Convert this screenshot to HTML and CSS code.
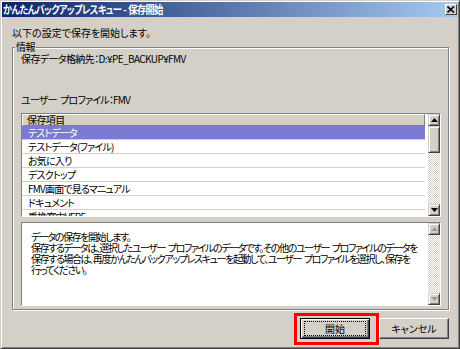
FILE: index.html
```html
<!DOCTYPE html>
<html lang="ja">
<head>
  <meta charset="UTF-8" />
  <title>かんたんバックアップレスキュー - 保存開始</title>
  <link rel="stylesheet" href="styles.css">
</head>
<body>

<div class="window">
  <div class="titlebar">
    <span class="title">かんたんバックアップレスキュー - 保存開始</span>
    <span class="close">
      <svg width="8" height="7" viewBox="0 0 8 7"><path d="M0.5 0.5 L7 6.5 M7 0.5 L0.5 6.5" stroke="#000" stroke-width="1.6"/></svg>
    </span>
  </div>

  <div class="content">
    <p class="lead">以下の設定で保存を開始します。</p>

    <fieldset class="group">
      <legend>情報</legend>
      <div class="group-body">
        <p class="info">保存データ格納先：D:¥PE_BACKUP¥FMV</p>
        <p class="info profile">ユーザー プロファイル：FMV</p>

        <div class="list">
          <div class="list-main">
            <div class="list-head">保存項目</div>
            <ul class="rows">
              <li class="selected">テストデータ</li>
              <li>テストデータ(ファイル)</li>
              <li>お気に入り</li>
              <li>デスクトップ</li>
              <li>FMV画面で見るマニュアル</li>
              <li>ドキュメント</li>
              <li>乗換案内VER5</li>
            </ul>
          </div>
          <div class="scrollbar">
            <span class="sb-btn"><svg width="7" height="4" viewBox="0 0 7 4"><path d="M3.5 0 L7 4 L0 4 Z" fill="#000"/></svg></span>
            <span class="sb-btn thumb"></span>
            <span class="sb-track"></span>
            <span class="sb-btn"><svg width="7" height="4" viewBox="0 0 7 4"><path d="M0 0 L7 0 L3.5 4 Z" fill="#000"/></svg></span>
          </div>
        </div>

        <div class="memo">
          <div class="memo-text">
            データの保存を開始します。<br>
            保存するデータは、選択したユーザー プロファイルのデータです。その他のユーザー プロファイルのデータを<br>
            保存する場合は、再度かんたんバックアップレスキューを起動して、ユーザー プロファイルを選択し、保存を<br>
            行ってください。
          </div>
          <div class="scrollbar">
            <span class="sb-btn"><svg width="7" height="4" viewBox="0 0 7 4"><path d="M3.5 0 L7 4 L0 4 Z" fill="#9a9a9a"/></svg></span>
            <span class="sb-track"></span>
            <span class="sb-btn"><svg width="7" height="4" viewBox="0 0 7 4"><path d="M0 0 L7 0 L3.5 4 Z" fill="#9a9a9a"/></svg></span>
          </div>
        </div>
      </div>
    </fieldset>

    <div class="buttons">
      <button type="button" class="btn default"><span>開始</span></button>
      <button type="button" class="btn"><span>キャンセル</span></button>
    </div>
  </div>
</div>

</body>
</html>
```

FILE: styles.css
```css
body {
  margin: 0;
  font-family: "Noto Sans CJK JP", "Liberation Sans", sans-serif;
  font-size: 10px;
  font-feature-settings: "palt";
  letter-spacing: -0.6px;
  color: #000;
}
.window {
  width: 460px;
  height: 349px;
  box-sizing: border-box;
  background: #d4d0c8;
  border: 1px solid;
  border-color: #d4d0c8 #404040 #404040 #d4d0c8;
  box-shadow: inset 1px 1px #fff, inset -1px -1px #808080;
  padding: 1px;
  display: flex;
  flex-direction: column;
}
.titlebar {
  height: 15px;
  display: flex;
  align-items: center;
  padding-left: 1px;
  background: linear-gradient(90deg, #0a246a, #a6caf0);
}
.title {
  color: #fff;
  font-weight: bold;
  font-size: 11px;
  letter-spacing: -0.8px;
  word-spacing: 1px;
  line-height: 15px;
  white-space: pre;
  transform: scaleX(0.84);
  transform-origin: left center;
}
.close {
  margin-left: auto;
  margin-right: 1px;
  width: 12px;
  height: 11px;
  box-sizing: border-box;
  background: #d4d0c8;
  border: 1px solid;
  border-color: #fff #404040 #404040 #fff;
  display: flex;
  align-items: center;
  justify-content: center;
}
.content {
  flex: 1;
  padding: 0 9px 0 10px;
  display: flex;
  flex-direction: column;
}
.lead {
  margin: 10px 0 2px;
  line-height: 12px;
  letter-spacing: 0;
}
.group {
  min-width: 0;
  margin: 0;
  padding: 0 7px 3px 2px;
  border: 1px solid #808080;
  box-shadow: 1px 1px 0 #fff, inset 1px 1px 0 #fff;
}
.group legend {
  padding: 0 1px;
  line-height: 12px;
  background: #d4d0c8;
}
.group-body {
  padding-left: 6px;
}
.info {
  margin: 0;
  line-height: 12px;
  white-space: nowrap;
}
.profile {
  margin-top: 29px;
  letter-spacing: -0.8px;
  word-spacing: 2px;
}
.list {
  margin-top: 7px;
  height: 104px;
  box-sizing: border-box;
  display: flex;
  background: #fff;
  border: 1px solid;
  border-color: #808080 #fff #fff #808080;
}
.list-main {
  flex: 1;
  min-width: 0;
  overflow: hidden;
  padding-right: 3px;
}
.list-head {
  height: 12px;
  box-sizing: border-box;
  background: #d4d0c8;
  border: 1px solid;
  border-color: #fff #808080 #808080 #fff;
  padding-left: 4px;
  line-height: 10px;
}
.rows {
  list-style: none;
  margin: 0;
  padding: 0;
}
.rows li {
  height: 14px;
  box-sizing: border-box;
  line-height: 13px;
  padding-left: 6px;
  border-bottom: 1px solid #d4d0c8;
  white-space: nowrap;
  letter-spacing: -0.8px;
}
.rows li.selected {
  background: #7b7bd2;
  color: #fff;
}
.scrollbar {
  width: 12px;
  flex: none;
  display: flex;
  flex-direction: column;
  background: repeating-conic-gradient(#fff 0 25%, #d4d0c8 0 50%) 0 0 / 2px 2px;
}
.sb-btn {
  height: 12px;
  box-sizing: border-box;
  background: #d4d0c8;
  border: 1px solid;
  border-color: #d4d0c8 #404040 #404040 #d4d0c8;
  box-shadow: inset 1px 1px #fff, inset -1px -1px #808080;
  display: flex;
  align-items: center;
  justify-content: center;
}
.sb-btn.thumb {
  height: 27px;
}
.sb-track {
  flex: 1;
}
.memo {
  margin-top: 5px;
  height: 84px;
  box-sizing: border-box;
  display: flex;
  background: #fff;
  border: 1px solid;
  border-color: #808080 #fff #fff #808080;
}
.memo-text {
  flex: 1;
  min-width: 0;
  padding: 8px 0 0 9px;
  line-height: 11px;
  letter-spacing: -1.4px;
  word-spacing: 2px;
  white-space: nowrap;
  overflow: hidden;
}
.buttons {
  margin-top: 8px;
  display: flex;
  justify-content: flex-end;
  gap: 9px;
}
.btn {
  position: relative;
  width: 70px;
  height: 21px;
  padding: 0;
  font: inherit;
  color: #000;
  background: #d4d0c8;
  border: 1px solid;
  border-color: #fff #404040 #404040 #fff;
  box-shadow: inset -1px -1px #808080;
}
.btn span {
  display: block;
  line-height: 13px;
}
.btn.default {
  border-color: #000;
  box-shadow: inset 1px 1px #fff, inset -1px -1px #404040, inset -2px -2px #808080;
}
.btn.default span {
  margin: 2px 3px 2px 3px;
  border: 1px dotted #000;
}
.btn.default::before {
  content: "";
  position: absolute;
  top: -6px;
  bottom: -7px;
  left: -7px;
  right: -10px;
  border: 3px solid #f00;
}
```
